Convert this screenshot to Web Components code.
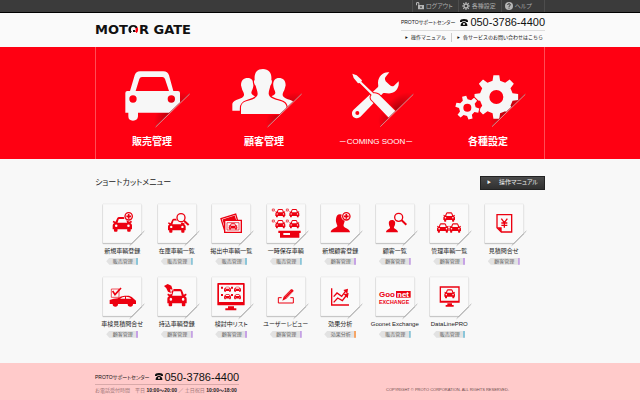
<!DOCTYPE html>
<html lang="ja">
<head>
<meta charset="utf-8">
<meta name="viewport" content="width=device-width, initial-scale=1">
<title>MOTOR GATE</title>
<style>
    body {
        margin: 0;
        min-height: 100vh;
        display: flex;
        flex-direction: column;
        background: #f8f8f8;
        color: #222;
        font-family: "Liberation Sans", "Noto Sans CJK JP", sans-serif;
        font-size: 6px;
        line-height: 8px;
        --red: #ff0012;
        --column: 450px;
    }
    shortcut-menu {
        flex: 1;
    }
</style>
</head>
<body>
<top-bar></top-bar>
<site-header></site-header>
<main-nav>
    <nav-tile icon="car">販売管理</nav-tile>
    <nav-tile icon="people">顧客管理</nav-tile>
    <nav-tile icon="tools" soon>－COMING SOON－</nav-tile>
    <nav-tile icon="gears">各種設定</nav-tile>
</main-nav>
<shortcut-menu>
    <shortcut-card icon="carAdd" tag="販売管理">新規車輌登録</shortcut-card>
    <shortcut-card icon="carSearch" tag="販売管理">在庫車輌一覧</shortcut-card>
    <shortcut-card icon="photos" tag="販売管理">掲出中車輌一覧</shortcut-card>
    <shortcut-card icon="tray" tag="販売管理">一時保存車輌</shortcut-card>
    <shortcut-card icon="personAdd" tag="顧客管理">新規顧客登録</shortcut-card>
    <shortcut-card icon="personSearch" tag="顧客管理">顧客一覧</shortcut-card>
    <shortcut-card icon="fleet" tag="顧客管理">管理車輌一覧</shortcut-card>
    <shortcut-card icon="estimate" tag="顧客管理">見積問合せ</shortcut-card>
    <shortcut-card icon="inspection" tag="顧客管理">車検見積問合せ</shortcut-card>
    <shortcut-card icon="bringIn" tag="顧客管理">持込車輌登録</shortcut-card>
    <shortcut-card icon="monitorList" tag="顧客管理">検討中リスト</shortcut-card>
    <shortcut-card icon="review" tag="顧客管理">ユーザーレビュー</shortcut-card>
    <shortcut-card icon="chart" tag="効果分析">効果分析</shortcut-card>
    <shortcut-card icon="goonet" tag="販売管理">Goonet Exchange</shortcut-card>
    <shortcut-card icon="monitorCar" tag="販売管理">DataLinePRO</shortcut-card>
</shortcut-menu>
<site-footer></site-footer>

<script>
// polygon outline of a cog wheel with a round hole
function gear(cx, cy, outer, inner, hole, teeth, turn) {
    const points = [];
    const step = Math.PI * 2 / teeth;
    for (let i = 0; i < teeth; i++) {
        const a = i * step + turn;
        [[-0.29, inner], [-0.17, outer], [0.17, outer], [0.29, inner]].forEach(([k, r]) => {
            points.push((cx + Math.cos(a + k * step) * r).toFixed(1) + ',' + (cy + Math.sin(a + k * step) * r).toFixed(1));
        });
    }
    return `<path fill-rule="evenodd" stroke-linejoin="round" d="M${points.join('L')}Z M${cx - hole},${cy}a${hole},${hole} 0 1 0 ${hole * 2},0a${hole},${hole} 0 1 0 ${-hole * 2},0Z"/>`;
}

// small front view of a car, 60 x 46 units before scaling
function car(x, y, w, h = w * 46 / 60) {
    return `<g transform="translate(${x} ${y}) scale(${w / 60} ${h / 46})">
        <path fill-rule="evenodd" d="M5 19L0 16 2 12 9 15 14 4Q16 0 20 0H40Q44 0 46 4L51 15 58 12 60 16 55 19Q60 21 60 26V38H56V43Q56 46 53 46H48Q45 46 45 43V38H15V43Q15 46 12 46H7Q4 46 4 43V38H0V26Q0 21 5 19Z
        M15 18H45L41 6H19Z M7 27a4 4 0 1 0 8 0a4 4 0 1 0 -8 0Z M45 27a4 4 0 1 0 8 0a4 4 0 1 0 -8 0Z"/></g>`;
}

function plus(cx, cy) {
    return `<circle cx="${cx}" cy="${cy}" r="15" fill="#fafafa"/>
        <circle cx="${cx}" cy="${cy}" r="11" fill="#fafafa" stroke="currentColor" stroke-width="4"/>
        <path d="M${cx - 7} ${cy}h14M${cx} ${cy - 7}v14" stroke="currentColor" stroke-width="5"/>`;
}

function magnifier(cx, cy) {
    return `<path d="M${cx + 9} ${cy + 9}l14 13" stroke="#fafafa" stroke-width="11"/>
        <circle cx="${cx}" cy="${cy}" r="15" fill="#fafafa"/>
        <circle cx="${cx}" cy="${cy}" r="12" fill="#fafafa" stroke="currentColor" stroke-width="4"/>
        <path d="M${cx + 9} ${cy + 9}l14 13" stroke="currentColor" stroke-width="6"/>`;
}

const mainIcons = {
    car: {
        x: 72, slash: 'M196 245L298 146',
        art: `<path fill-rule="evenodd" d="M106 144Q106 138 112 138H120L134 91Q138 79 150 79H220Q233 79 237 91L250 138H264Q270 138 270 144V203H144V214Q143 227 129 227Q115 227 115 214V203H106Z
            M137 138H237L225 102Q223 96 217 96H156Q150 96 148 102Z M118 162a11 11 0 1 0 22 0a11 11 0 1 0 -22 0Z M233 162a11 11 0 1 0 22 0a11 11 0 1 0 -22 0Z"/>`
    },
    people: {
        x: 408, slash: 'M532 245L634 146',
        art: `<path d="M473 99C486 99 492 109 490 123C489 133 485 136 484 143C484 152 500 153 506 160V197H427V176C430 163 460 163 462 151C463 142 457 139 455 128L453 121C453 106 461 99 473 99Z
            M567 99C554 99 548 109 550 123C551 133 555 136 556 143C556 152 540 153 534 160V197H612V172C606 163 580 163 578 151C577 142 583 139 585 128L587 121C587 106 579 99 567 99Z"/>
            <path stroke="var(--red)" stroke-width="7" paint-order="stroke" d="M519 72C537 72 546 85 544 104C548 108 545 118 541 122C539 132 536 137 536 147C538 158 552 163 571 168C586 172 590 181 590 190V207H453V190C453 177 458 172 471 168C489 163 502 158 503 147C503 138 499 132 497 122C492 117 490 108 494 104C492 84 501 72 519 72Z"/>`
    },
    tools: {
        x: 54, slash: 'M180 244L279 147',
        art: `<path fill-rule="evenodd" d="M208 82C191 79 174 94 174 113C174 119 176 122 174 126L100 195C93 202 95 216 106 219C113 221 119 218 123 214L189 145C194 142 202 146 211 145C228 143 239 126 236 109L222 122Q216 126 209 120L197 109Q192 104 196 97Z
            M106 204a6 6 0 1 0 12 0a6 6 0 1 0 -12 0Z"/>
            <path stroke="var(--red)" stroke-width="6" stroke-linejoin="round" paint-order="stroke" d="M97 86L110 91 126 106 124 110 160 145Q169 143 177 149L187 159 230 202 210 222 166 176 154 164Q149 156 155 150L119 114 114 115 101 99Z"/>`
    },
    gears: {
        x: 390, slash: 'M515 244L615 147',
        art: gear(529, 156, 66, 50, 21, 8, Math.PI / 2) +
            `<g stroke="var(--red)" stroke-width="6" paint-order="stroke">${gear(442, 188, 36, 25, 12, 6, 0.25)}</g>`
    }
};

const cardIcons = {
    carAdd: [-10, -6, car(54, 51, 58) + plus(102, 49)],
    carSearch: [-174, -6, car(219, 56, 53, 42) + magnifier(258, 53)],
    photos: [-337, -6, `<g fill="#fafafa" stroke="currentColor" stroke-width="4">
        <path d="M379 56L423 42 433 75 390 92Z"/><path d="M386 60L419 49 426 72 393 84Z" fill="currentColor"/>
        <path d="M390 61H440V97H390Z"/><path d="M397 68H433V90H397Z" stroke-width="2"/></g>` + car(402, 70, 26, 19)],
    tray: [-20, -6, [[57, 27], [99, 27], [57, 60], [99, 60]].map(([x, y]) =>
        car(x + 3, y, 30, 25) + `<path d="M${x - 6} ${y}h6v6h-6z" fill="#fafafa" stroke="currentColor" stroke-width="2"/>`).join('') +
        `<path fill-rule="evenodd" d="M69 92H136V99H132V113H74V99H69ZM84 99V105H104V99Z"/>`],
    personAdd: [-184, -6, `<path d="M256 43C269 43 274 53 270 64C267 74 266 76 267 79C269 84 285 86 286 97H228C229 86 245 84 248 79C249 75 242 68 244 57C245 48 248 43 256 43Z"/>` + plus(275, 49)],
    personSearch: [-347, -6, `<path d="M410 60C419 60 421 67 419 74C417 80 415 81 416 84C418 87 427 88 428 97H392C393 88 403 87 404 84C405 81 402 79 401 74C399 66 402 60 410 60Z"/>` + magnifier(430, 52)],
    fleet: [-31, -6, car(86, 37, 35, 28) + car(67, 70, 35, 28) + car(104, 70, 35, 28)],
    estimate: [-194, -6, `<path d="M245 44H289V96H258L245 83Z" fill="none" stroke="currentColor" stroke-width="4"/><path d="M245 82H259V97Z"/>
        <path d="M258 56L267 68 276 56M267 67V83M258 69H276M258 76H276" fill="none" stroke="currentColor" stroke-width="4"/>`],
    inspection: [-10, -14, `<path d="M50 56H73V81H50Z" fill="none" stroke="currentColor" stroke-width="2"/><path d="M54 62L61 73 79 53" fill="none" stroke="currentColor" stroke-width="5"/>
        <path fill-rule="evenodd" d="M45 89Q57 84 69 84Q78 76 90 76H103Q112 78 118 86L124 91V101H115A8 8 0 0 1 99 101H70A8 8 0 0 1 54 101H45ZM76 85H91V79Q83 79 76 85ZM94 85H110Q105 79 94 79Z"/>
        <circle cx="62" cy="101" r="6"/><circle cx="107" cy="101" r="6"/>`],
    bringIn: [-174, -14, car(217, 56, 58, 52) + `<path stroke="#fafafa" stroke-width="4" paint-order="stroke" d="M207 47L218 41 229 46 233 58 225 57 228 68 219 64 214 54Z"/>`],
    monitorList: [-337, -14, `<path fill-rule="evenodd" d="M368 40Q368 38 370 38H448Q450 38 450 40V103Q450 105 448 105H370Q368 105 368 103ZM373 43V95H445V43Z"/><path d="M400 108H418V114H425V120H392V114H400Z"/>` +
        [[388, 49], [418, 49], [388, 71], [418, 71]].map(([x, y]) => car(x, y, 21, 16) + `<path d="M${x - 9} ${y}h6v6h-6z"/>`).join('')],
    review: [-501, -14, `<path d="M560 82H550V98H595V82H586" fill="none" stroke="currentColor" stroke-width="3"/>
        <path d="M562 91L566 79 588 57Q594 55 596 62L574 85Z"/><path d="M568 81L588 61M572 84L592 65" stroke="#fafafa" stroke-width="1"/>`],
    chart: [-4, -14, `<g fill="none" stroke="currentColor" stroke-width="4"><path d="M51 54V104H103"/><path d="M57 79L67 68 81 78 94 61M57 96L69 83 83 91 96 74"/></g>
        <path d="M86 59L100 55 98 70ZM87 72L102 68 99 84Z"/>`],
    goonet: [-167, -14, `<rect x="242" y="62" width="44" height="20"/>
        <g font-family="Liberation Sans" font-weight="bold"><text x="191" y="80" font-size="24">Goo</text><text x="245" y="79" font-size="24" fill="#fff">net</text>
        <text x="191" y="102" font-size="16">EXCHANGE</text></g>`],
    monitorCar: [-331, -14, `<path fill-rule="evenodd" d="M375 48H435V97H375ZM379 52V91H431V52Z"/><path d="M398 99H412V104H417V109H393V104H398Z"/>` + car(389, 57, 32, 27)]
};

const tagColors = { '販売管理': '#8ac6da', '顧客管理': '#c6a2e6', '効果分析': '#f6a565' };

class SupportPhone extends HTMLElement {
    connectedCallback() {
        this.attachShadow({ mode: 'open' });
        this.shadowRoot.innerHTML = `
            <style>
                :host { display: flex; align-items: center; gap: 5px; color: #111; font-size: 5px; }
                .name { font-feature-settings: "palt"; }
                a { display: flex; align-items: center; gap: 2px; color: inherit; text-decoration: none; font-size: 11px; line-height: 12px; }
                svg { width: 8px; height: 7px; }
            </style>
            <span class="name">PROTOサポートセンター</span>
            <a href="tel:05037864400">
                <svg viewBox="0 0 24 21" aria-hidden="true"><path fill="#111" fill-rule="evenodd" d="M0 7Q0 0 12 0T24 7V9H17V6H7V9H0ZM8 8H16V10Q21 12 22 17V21H2V17Q3 12 8 10ZM9 15a3 3 0 1 0 6 0a3 3 0 1 0 -6 0Z"/></svg>
                <span>050-3786-4400</span>
            </a>
        `;
    }
}

class TopBar extends HTMLElement {
    connectedCallback() {
        this.attachShadow({ mode: 'open' });
        this.shadowRoot.innerHTML = `
            <style>
                :host { display: block; background: #3b3b3b; border-bottom: 1px solid #000; }
                nav { display: flex; justify-content: flex-end; max-width: var(--column); margin: 0 auto; }
                a {
                    display: flex;
                    align-items: center;
                    gap: 2px;
                    height: 12px;
                    padding: 0 5px 0 3px;
                    border-left: 1px solid #4d4d4d;
                    color: #aaa;
                    text-decoration: none;
                    font-feature-settings: "palt";
                }
                a:last-child { padding-right: 12px; border-right: 1px solid #4d4d4d; }
                svg { width: 8px; height: 8px; fill: #b5b5b5; }
            </style>
            <nav>
                <a href="#logout"><svg viewBox="0 0 24 24"><path fill-rule="evenodd" d="M0 10V4Q0 0 5 0T10 4V9H24V22H6V9H7V5Q7 3 5 3T3 5V10ZM13 13V18H17V13Z"/></svg>ログアウト</a>
                <a href="#settings"><svg viewBox="0 0 24 24">${gear(12, 12, 12, 8, 4, 8, 0)}</svg>各種設定</a>
                <a href="#help"><svg viewBox="0 0 24 24"><circle cx="12" cy="12" r="12"/><path d="M8 9Q8 5 12 5T16 9Q16 11 12 13V15M12 17V20" fill="none" stroke="#3b3b3b" stroke-width="3"/></svg>ヘルプ</a>
            </nav>
        `;
    }
}

class SiteHeader extends HTMLElement {
    connectedCallback() {
        this.attachShadow({ mode: 'open' });
        this.shadowRoot.innerHTML = `
            <style>
                :host { display: block; background: #fafafa; }
                header { display: flex; justify-content: space-between; align-items: flex-start; max-width: var(--column); margin: 0 auto; padding: 3px 0 5px; }
                h1 { margin: 6px 0 0; font: bold 13px/16px "DejaVu Sans", sans-serif; color: #111; white-space: nowrap; }
                .dial {
                    position: relative;
                    color: transparent;
                    background: conic-gradient(#111 0 60deg, var(--red) 60deg 140deg, transparent 140deg 220deg, #111 220deg);
                    -webkit-background-clip: text;
                    background-clip: text;
                }
                .dial::after { content: ""; position: absolute; left: 5px; top: 8px; width: 2px; height: 2px; background: #111; }
                .links { display: flex; justify-content: flex-end; gap: 5px; margin-top: 2px; padding: 2px 2px 0 0; border-top: 1px solid #ddd; font-size: 5px; }
                a { color: #111; text-decoration: none; }
                a + a { border-left: 1px solid #ccc; padding-left: 5px; }
                a::before { content: "▶"; font-size: 3px; vertical-align: middle; margin-right: 3px; }
            </style>
            <header>
                <h1>MOT<span class="dial">O</span>R GATE</h1>
                <div>
                    <support-phone></support-phone>
                    <nav class="links">
                        <a href="#manual">操作マニュアル</a>
                        <a href="#contact">各サービスのお問い合わせはこちら</a>
                    </nav>
                </div>
            </header>
        `;
    }
}

class MainNav extends HTMLElement {
    connectedCallback() {
        this.attachShadow({ mode: 'open' });
        this.shadowRoot.innerHTML = `
            <style>
                :host { display: block; background: var(--red); }
                nav {
                    display: grid;
                    grid-template-columns: repeat(4, 1fr);
                    box-sizing: border-box;
                    max-width: var(--column);
                    margin: 0 auto;
                    border: solid #ff4c55;
                    border-width: 0 1px;
                }
            </style>
            <nav><slot></slot></nav>
        `;
    }
}

class NavTile extends HTMLElement {
    connectedCallback() {
        const icon = mainIcons[this.getAttribute('icon')];
        const [x1, y1, x2, y2] = icon.slash.match(/\d+/g).map(Number);
        const mx = (x1 + x2) / 2;
        const my = (y1 + y2) / 2;
        this.attachShadow({ mode: 'open' });
        this.shadowRoot.innerHTML = `
            <style>
                :host { display: block; }
                a { display: flex; flex-direction: column; align-items: center; padding: 18px 0 10px; color: #fff; text-decoration: none; font-size: 10px; line-height: 14px; font-weight: bold; white-space: nowrap; }
                :host([soon]) a { font-size: 8px; font-weight: normal; font-feature-settings: "palt"; }
                svg { width: 76px; height: 64px; margin-bottom: 6px; }
            </style>
            <a href="#">
                <svg viewBox="${icon.x} 60 228 192" aria-hidden="true">
                    <defs>
                        <radialGradient id="shade" gradientUnits="userSpaceOnUse" cx="0" cy="0" r="1" gradientTransform="translate(${mx} ${my}) rotate(-44) scale(70 34)">
                            <stop offset="0" stop-color="#400" stop-opacity=".45"/><stop offset="1" stop-color="#400" stop-opacity="0"/>
                        </radialGradient>
                        <clipPath id="cut"><path d="M${x1 - 250} ${y1 + 243}L${x2 + 200} ${y2 - 194}H0V0H-300V500Z"/></clipPath>
                    </defs>
                    <path d="M${x1} ${y1}L${x2} ${y2}L${x2 - 60} ${y2 - 60}L${x1 - 60} ${y1 - 60}Z" fill="url(#shade)"/>
                    <g fill="#f7f7f7" clip-path="url(#cut)">${icon.art}</g>
                    <path d="${icon.slash}" stroke="#a0303a" stroke-width="3"/>
                    <path d="${icon.slash}" stroke="#ffb0b0" stroke-width="2" transform="translate(1 1)"/>
                </svg>
                <slot></slot>
            </a>
        `;
    }
}

class ShortcutMenu extends HTMLElement {
    connectedCallback() {
        this.attachShadow({ mode: 'open' });
        this.shadowRoot.innerHTML = `
            <style>
                :host { display: block; }
                main { max-width: var(--column); margin: 0 auto; padding: 17px 0 25px; }
                .head { display: flex; justify-content: space-between; align-items: center; margin-bottom: 12px; }
                h2 { margin: 0; font-size: 8px; line-height: 12px; font-weight: normal; font-feature-settings: "palt"; }
                button { height: 14px; padding: 0 6px; border: 1px solid #222; background: linear-gradient(#4a4a4a, #303030); color: #eee; font: inherit; line-height: 8px; font-feature-settings: "palt"; }
                button::before { content: "▶"; margin-right: 8px; font-size: 4px; vertical-align: middle; }
                .grid { display: grid; grid-template-columns: repeat(8, 1fr); row-gap: 10px; padding-right: 14px; }
            </style>
            <main>
                <div class="head">
                    <h2>ショートカットメニュー</h2>
                    <button type="button">操作マニュアル</button>
                </div>
                <div class="grid"><slot></slot></div>
            </main>
        `;
    }
}

class ShortcutCard extends HTMLElement {
    connectedCallback() {
        const [dx, dy, art] = cardIcons[this.getAttribute('icon')];
        const tag = this.getAttribute('tag');
        this.attachShadow({ mode: 'open' });
        this.shadowRoot.innerHTML = `
            <style>
                :host { display: block; }
                a { display: flex; flex-direction: column; align-items: center; color: #222; text-decoration: none; white-space: nowrap; font-feature-settings: "palt"; }
                svg { width: 48px; height: 45px; color: #ec0010; overflow: visible; }
                .card { filter: drop-shadow(0 2px 2px rgba(0, 0, 0, .3)); }
                .tag {
                    box-sizing: border-box;
                    width: 32px;
                    margin-top: 3px;
                    padding-left: 3px;
                    border-right: 2px solid ${tagColors[tag]};
                    background: #e2e2e2;
                    clip-path: polygon(0 50%, 3px 0, 100% 0, 100% 100%, 3px 100%);
                    color: #666;
                    font-size: 5px;
                    line-height: 7px;
                    text-align: center;
                }
            </style>
            <a href="#">
                <svg viewBox="0 0 144 135" aria-hidden="true">
                    <path class="card" fill="#fafafa" stroke="#e2e2e2" d="M16 6H129Q131 6 131 8V94L102 123H16Q14 123 14 121V8Q14 6 16 6Z"/>
                    <path d="M95 131L139 87" stroke="#999" stroke-width="2"/>
                    <g fill="currentColor" transform="translate(${dx} ${dy})">${art}</g>
                </svg>
                <slot></slot>
                <span class="tag">${tag}</span>
            </a>
        `;
    }
}

class SiteFooter extends HTMLElement {
    connectedCallback() {
        this.attachShadow({ mode: 'open' });
        this.shadowRoot.innerHTML = `
            <style>
                :host { display: block; background: #ffcaca; }
                footer { display: flex; justify-content: space-between; align-items: flex-end; max-width: var(--column); margin: 0 auto; padding: 8px 0 7px; }
                .hours { margin: 1px 0 0; padding-top: 1px; border-top: 1px solid #d9a9a9; color: #a07878; font-size: 5px; }
                b { color: #222; }
                small { padding-right: 36px; color: #6b4a4a; font-size: 4px; }
            </style>
            <footer>
                <div>
                    <support-phone></support-phone>
                    <p class="hours">お電話受付時間　平日 <b>10:00～20:00</b> ／ 土日祝日 <b>10:00～18:00</b></p>
                </div>
                <small>COPYRIGHT © PROTO CORPORATION. ALL RIGHTS RESERVED.</small>
            </footer>
        `;
    }
}

customElements.define('support-phone', SupportPhone);
customElements.define('top-bar', TopBar);
customElements.define('site-header', SiteHeader);
customElements.define('main-nav', MainNav);
customElements.define('nav-tile', NavTile);
customElements.define('shortcut-menu', ShortcutMenu);
customElements.define('shortcut-card', ShortcutCard);
customElements.define('site-footer', SiteFooter);
</script>
</body>
</html>
